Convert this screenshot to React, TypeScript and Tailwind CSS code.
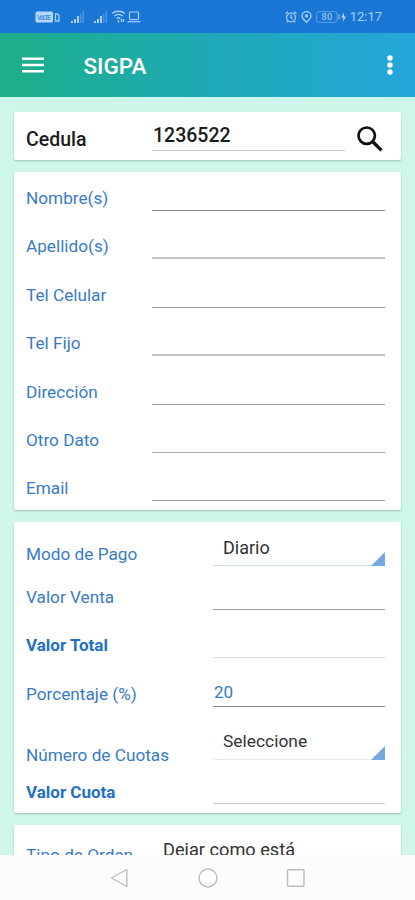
import React from 'react';

interface FieldProps {
  label: string;
  labelClass?: string;
  valueClass?: string;
  rowClass?: string;
  lineClass: string;
  value?: string;
}

const PERSONAL_FIELDS: FieldProps[] = [
  { label: 'Nombre(s)', lineClass: 'border-[#8f8f8f]' },
  { label: 'Apellido(s)', lineClass: 'border-[#c2c2c2] border-b-2' },
  { label: 'Tel Celular', lineClass: 'border-[#999999]' },
  { label: 'Tel Fijo', lineClass: 'border-[#c2c2c2] border-b-2' },
  { label: 'Dirección', lineClass: 'border-[#a3a3a3]' },
  { label: 'Otro Dato', lineClass: 'border-[#a8a8a8]' },
  { label: 'Email', lineClass: 'border-[#9c9c9c]' },
];

const PersonalField: React.FC<FieldProps> = ({ label, lineClass }) => (
  <div className="flex h-[38px] items-end">
    <span className="w-[126px] text-[17.2px] leading-[26px] text-[#3a7bc4]">{label}</span>
    <div className={`h-full flex-1 border-b ${lineClass}`} />
  </div>
);

const PaymentField: React.FC<FieldProps> = ({ label, labelClass = '', rowClass = '', lineClass, value }) => (
  <div className={`flex items-end ${rowClass}`}>
    <span className={`w-[187px] leading-6 ${labelClass}`}>{label}</span>
    <div className={`flex h-full flex-1 items-end border-b ${lineClass}`}>
      {value && <span className="pl-px text-[17px] leading-7 text-[#2f7bcb]">{value}</span>}
    </div>
  </div>
);

const SpinnerField: React.FC<FieldProps> = ({
  label,
  labelClass = '',
  valueClass = '',
  rowClass = '',
  lineClass,
  value,
}) => (
  <div className={`flex items-end ${rowClass}`}>
    <span className={`w-[187px] text-[17.2px] leading-6 text-[#3a7bc4] ${labelClass}`}>{label}</span>
    <div className={`flex h-full flex-1 items-end justify-between border-b ${lineClass}`}>
      <span className={`pl-[10px] leading-6 text-[#333333] ${valueClass}`}>{value}</span>
      <svg width="14" height="14" viewBox="0 0 14 14" className="-mb-px" fill="#76a7e1">
        <path d="M14 0v14H0z" />
      </svg>
    </div>
  </div>
);

const SignalIcon = () => (
  <svg width="13" height="12" viewBox="0 0 13 12" fill="#a9d0f8">
    <path d="M0 10h2v2H0zM3 8h2v4H3zM6 5h2v7H6z" />
    <path d="M9 3h1.5v9H9zM11.5 0H13v12h-1.5z" opacity=".35" />
  </svg>
);

const StatusBar = () => (
  <div className="flex h-[33px] items-center justify-between bg-[#1976d5] pl-[35px] pr-[33px] text-[#a9d0f8]">
    <div className="flex items-center">
      <svg width="26" height="12" viewBox="0 0 26 12">
        <rect x="0.5" y="0.5" width="17.5" height="11" rx="1.5" fill="#b4d7fa" />
        <text x="2" y="8.6" fontSize="7" fontWeight="700" fill="#4a94df" fontFamily="Roboto, sans-serif" textLength="14">
          VoLTE
        </text>
        <path d="M20.5 3h2l1.5 1.5V10h-3.5z" fill="none" stroke="#a9d0f8" strokeWidth="1.3" />
      </svg>
      <div className="ml-[10px]"><SignalIcon /></div>
      <div className="ml-[10px]"><SignalIcon /></div>
      <svg className="ml-1" width="15" height="13" viewBox="0 0 15 13" fill="none" stroke="#a9d0f8" strokeWidth="1.3">
        <path d="M1 3.500c3.800-3 9.200-3 13 0M3.300 6c2.400-2 5.900-2 8.300 0M5.600 8.500c1.200-1 2.600-1 3.800 0" />
        <path d="M7.500 10v2.500M10.500 9v3M12.500 9v3" />
      </svg>
      <svg className="ml-px" width="14" height="12" viewBox="0 0 14 12" fill="none" stroke="#a9d0f8" strokeWidth="1.2">
        <rect x="2.5" y="1" width="9" height="7.5" rx="0.8" />
        <path d="M0.5 10.700h13" />
      </svg>
    </div>
    <div className="flex items-center">
      <svg width="12" height="12" viewBox="0 0 12 12" fill="none" stroke="#a9d0f8" strokeWidth="1.2">
        <circle cx="6" cy="6.5" r="4.4" />
        <path d="M6 4v2.700l1.800 1M0.600 2.800 3 0.800M11.400 2.800 9 0.800M2.800 10l-1 1.300M9.200 10l1 1.300" />
      </svg>
      <svg className="ml-1" width="11" height="12" viewBox="0 0 11 12" fill="none" stroke="#a9d0f8" strokeWidth="1.3">
        <path d="M5.500 11.300C3.300 9 1 7.300 1 4.900a4.500 4.200 0 0 1 9 0c0 2.400-2.300 4.100-4.500 6.400z" />
        <circle cx="5.5" cy="4.9" r="1" fill="#a9d0f8" />
      </svg>
      <svg className="ml-1" width="31" height="12" viewBox="0 0 31 12">
        <rect x="0.6" y="0.6" width="20.5" height="10.8" rx="2.5" fill="none" stroke="#5fa1e6" />
        <text x="5.5" y="9.3" fontSize="9.5" fontWeight="500" fill="#8fc0f2" fontFamily="Roboto, sans-serif">80</text>
        <path d="M23 3.500v5" stroke="#76b0ed" strokeWidth="1.5" />
        <path d="M28 1.500 25.200 6.500h2L27 10.500l3-5h-2z" fill="#b4d7fa" />
      </svg>
      <span className="ml-[3px] text-[13px] leading-none">12:17</span>
    </div>
  </div>
);

const AppBar = () => (
  <div className="flex h-16 items-center bg-linear-to-r from-[#1eae88] via-[#20a9b5] to-[#25a6db] px-[22px] text-white">
    <svg width="22" height="16" viewBox="0 0 22 16" fill="currentColor">
      <path d="M0 0.500h22v2.400H0zM0 6.800h22v2.400H0zM0 13.100h22v2.400H0z" />
    </svg>
    <h1 className="ml-[39.5px] flex-1 pt-[3px] text-[22.5px] font-medium leading-none">SIGPA</h1>
    <svg width="6" height="20" viewBox="0 0 6 20" fill="currentColor">
      <circle cx="3" cy="3" r="2.7" />
      <circle cx="3" cy="10" r="2.7" />
      <circle cx="3" cy="17" r="2.7" />
    </svg>
  </div>
);

const NavBar = () => (
  <div className="flex h-[45px] items-center bg-[#fcfcfc] pl-[109px]">
    <svg width="200" height="20" viewBox="0 0 200 20" fill="none" stroke="#bdbdbd" strokeWidth="1.4" strokeLinejoin="round">
      <path d="M17.800 1.500v17L2.500 10z" />
      <circle cx="99" cy="10" r="9" />
      <rect x="178.5" y="1.7" width="16.5" height="16.5" rx="0.8" />
    </svg>
  </div>
);

const CARD = 'rounded-[2px] bg-white px-3 shadow-[0_1px_2px_rgba(0,60,50,0.28)]';

export default function App() {
  return (
    <div className="flex h-[900px] w-[415px] flex-col overflow-hidden bg-[#cef6eb] font-[Roboto,sans-serif]">
      <StatusBar />
      <AppBar />
      <main className="flex min-h-0 flex-1 flex-col gap-3 overflow-hidden px-[14px] pt-[15px]">
        <section className={`flex h-12 shrink-0 ${CARD}`}>
          <span className="w-[126px] pt-4 text-[19.5px] font-medium leading-6 text-[#1c1c1c]">Cedula</span>
          <div className="h-[39px] w-[193px] border-b border-[#c4c4c4] pl-px pt-3 text-[19.5px] font-medium leading-6 text-[#1c1c1c]">
            1236522
          </div>
          <svg className="ml-3 mt-[14px]" width="26" height="26" viewBox="0 0 26 26" fill="none" stroke="#111111">
            <circle cx="9.7" cy="9.7" r="8.2" strokeWidth="2.7" />
            <path d="M15.800 15.800l8.600 8.600" strokeWidth="3.4" />
          </svg>
        </section>

        <section className={`flex h-[338px] shrink-0 flex-col gap-[10.4px] pt-px pr-4 ${CARD}`}>
          {PERSONAL_FIELDS.map((f) => <PersonalField key={f.label} {...f} />)}
        </section>

        <section className={`h-[291px] shrink-0 pr-4 ${CARD}`}>
          <SpinnerField
            label="Modo de Pago"
            value="Diario"
            valueClass="mb-[5px] text-[18px]"
            rowClass="h-[44px]"
            lineClass="border-[#cfe3df]"
          />
          <PaymentField label="Valor Venta" labelClass="text-[17.2px] text-[#3a7bc4] mb-px" rowClass="h-[44px]" lineClass="border-[#999999]" />
          <PaymentField label="Valor Total" labelClass="text-[17px] font-bold text-[#2470c4] mb-px" rowClass="h-[48px]" lineClass="border-[#d9d9d9]" />
          <PaymentField
            label="Porcentaje (%)"
            labelClass="text-[17.2px] text-[#3a7bc4] mb-px"
            rowClass="h-[49px]"
            lineClass="border-[#8f8f8f]"
            value="20"
          />
          <SpinnerField
            label="Número de Cuotas"
            value="Seleccione"
            labelClass="-mb-[7px]"
            valueClass="mb-[6px] text-[17.4px]"
            rowClass="h-[53px]"
            lineClass="border-[#e6eeec]"
          />
          <PaymentField label="Valor Cuota" labelClass="text-[17px] font-bold text-[#2470c4]" rowClass="h-[44px]" lineClass="border-[#cccccc]" />
        </section>

        <section className={`flex h-[80px] shrink-0 ${CARD}`}>
          <span className="w-[137px] pt-[18px] text-[17.2px] leading-6 text-[#3a7bc4]">Tipo de Orden</span>
          <span className="pt-[13px] text-[18.2px] leading-6 text-[#333333]">Dejar como está</span>
        </section>
      </main>
      <NavBar />
    </div>
  );
}
